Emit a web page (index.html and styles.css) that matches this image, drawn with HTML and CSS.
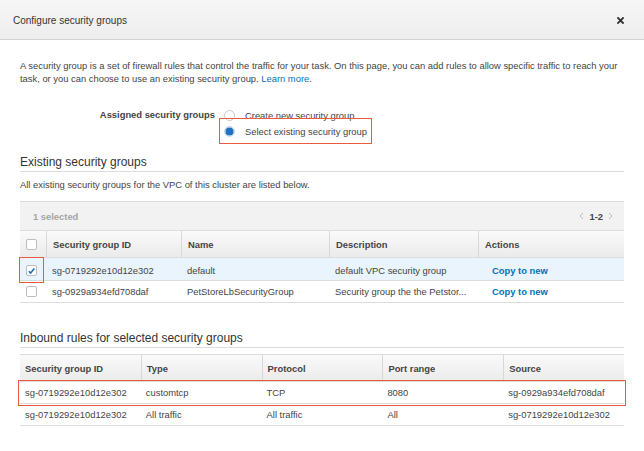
FILE: index.html
```html
<!DOCTYPE html>
<html lang="en">
<head>
<meta charset="utf-8">
<title>Configure security groups</title>
<link rel="stylesheet" href="styles.css">
</head>
<body>
<div class="modal">
  <header class="modal-header">
    <h1 class="modal-title">Configure security groups</h1>
    <button class="close" aria-label="Close">
      <svg width="7" height="7" viewBox="0 0 7 7"><path d="M1 1L6 6M6 1L1 6" stroke="#333" stroke-width="1.8" stroke-linecap="square"/></svg>
    </button>
  </header>
  <div class="modal-body">
    <p class="intro">A security group is a set of firewall rules that control the traffic for your task. On this page, you can add rules to allow specific traffic to reach your<br>task, or you can choose to use an existing security group. <a href="#" class="link">Learn more</a>.</p>

    <div class="field">
      <div class="field-label">Assigned security groups</div>
      <div class="options">
        <label class="option"><span class="radio"></span><span>Create new security group</span></label>
        <label class="option highlight"><span class="radio checked"></span><span>Select existing security group</span></label>
      </div>
    </div>

    <h2 class="section-title">Existing security groups</h2>
    <p class="section-desc">All existing security groups for the VPC of this cluster are listed below.</p>

    <div class="table existing">
      <div class="toolbar">
        <span class="count">1 selected</span>
        <span class="pager">
          <svg width="5" height="8" viewBox="0 0 5 8"><path d="M4 1L1 4L4 7" fill="none" stroke="#bbb" stroke-width="1"/></svg>
          <b>1-2</b>
          <svg width="5" height="8" viewBox="0 0 5 8"><path d="M1 1L4 4L1 7" fill="none" stroke="#bbb" stroke-width="1"/></svg>
        </span>
      </div>
      <div class="row head">
        <div class="cell cb"><span class="checkbox"></span></div>
        <div class="cell">Security group ID</div>
        <div class="cell">Name</div>
        <div class="cell">Description</div>
        <div class="cell">Actions</div>
      </div>
      <div class="row selected">
        <div class="cell cb"><span class="cb-mark"><span class="checkbox checked">
          <svg width="9" height="9" viewBox="0 0 9 9"><path d="M1.8 5.2L3.6 7L7.4 2.6" fill="none" stroke="#1b6fc2" stroke-width="1.6"/></svg>
        </span></span></div>
        <div class="cell">sg-0719292e10d12e302</div>
        <div class="cell">default</div>
        <div class="cell">default VPC security group</div>
        <div class="cell action"><a href="#" class="link bold">Copy to new</a></div>
      </div>
      <div class="row">
        <div class="cell cb"><span class="checkbox"></span></div>
        <div class="cell">sg-0929a934efd708daf</div>
        <div class="cell">PetStoreLbSecurityGroup</div>
        <div class="cell">Security group the the Petstor...</div>
        <div class="cell action"><a href="#" class="link bold">Copy to new</a></div>
      </div>
    </div>

    <h2 class="section-title inbound-title">Inbound rules for selected security groups</h2>

    <div class="table inbound">
      <div class="row head">
        <div class="cell">Security group ID</div>
        <div class="cell">Type</div>
        <div class="cell">Protocol</div>
        <div class="cell">Port range</div>
        <div class="cell">Source</div>
      </div>
      <div class="row highlight">
        <div class="cell">sg-0719292e10d12e302</div>
        <div class="cell">customtcp</div>
        <div class="cell">TCP</div>
        <div class="cell">8080</div>
        <div class="cell">sg-0929a934efd708daf</div>
      </div>
      <div class="row">
        <div class="cell">sg-0719292e10d12e302</div>
        <div class="cell">All traffic</div>
        <div class="cell">All traffic</div>
        <div class="cell">All</div>
        <div class="cell">sg-0719292e10d12e302</div>
      </div>
    </div>
  </div>
</div>
</body>
</html>
```

FILE: styles.css
```css
* { box-sizing: border-box; }

body {
  margin: 0;
  font-family: "Liberation Sans", Arial, Helvetica, sans-serif;
  font-size: 9.4px;
  color: #444;
  background: #fff;
}

.modal-header {
  height: 40px;
  border-bottom: 1px solid #d2d2d2;
  background: linear-gradient(#f6f6f6, #eeeeee);
  display: flex;
  align-items: center;
  justify-content: space-between;
  padding: 2px 20px 0 13px;
}

.modal-title {
  margin: 0;
  font-size: 10px;
  font-weight: normal;
  color: #333;
}

.close {
  border: 0;
  background: none;
  padding: 0;
  display: flex;
}

.modal-body {
  padding: 0 20px;
}

.intro {
  margin: 19px 0 0;
  line-height: 13px;
}

.link {
  color: #0073bb;
  text-decoration: none;
}

.bold { font-weight: bold; }

.field {
  display: flex;
  margin-top: 22px;
}

.field-label {
  width: 195px;
  text-align: right;
  font-weight: bold;
  line-height: 16px;
}

.options {
  display: flex;
  flex-direction: column;
  align-items: flex-start;
  margin-left: 8.5px;
}

.option {
  display: flex;
  align-items: center;
  gap: 10.5px;
  height: 16px;
}

.option.highlight {
  outline: 1.5px solid #ec5a3e;
  outline-offset: 4px;
}

.radio {
  width: 11px;
  height: 11px;
  border-radius: 50%;
  border: 1px solid #c8c8c8;
  background: #fff;
}

.radio.checked {
  border-color: #d6e4f1;
  background: #1f72c0;
  box-shadow: inset 0 0 0 0.5px #fff;
}

.section-title {
  margin: 15px 0 0;
  font-size: 12px;
  font-weight: normal;
  line-height: 16px;
  padding-bottom: 1px;
  border-bottom: 1px solid #dcdcdc;
  color: #333;
}

.section-desc {
  margin: 5.5px 0 0;
  line-height: 13px;
}

.table.existing {
  margin-top: 10.5px;
}

.toolbar {
  height: 30px;
  border-top: 1px solid #dcdcdc;
  border-bottom: 1px solid #dcdcdc;
  background: #f2f2f2;
  display: flex;
  align-items: center;
  justify-content: space-between;
  padding: 0 11px 0 13px;
}

.count {
  color: #a5a5a5;
  font-weight: bold;
}

.pager {
  display: flex;
  align-items: center;
  gap: 5px;
  color: #444;
}

.row {
  display: grid;
  grid-template-columns: 26px 135px 148px 149px 1fr;
  height: 22.5px;
  border-bottom: 1px solid #dcdcdc;
  align-items: stretch;
}

.row.head {
  height: 27px;
  background: linear-gradient(#fafafa, #ebebeb);
  font-weight: bold;
  color: #444;
}

.row.selected {
  background: #eaf4fd;
}

.cell {
  display: flex;
  align-items: center;
  padding-left: 6px;
  white-space: nowrap;
}

.row.head .cell + .cell {
  border-left: 1px solid #d8d8d8;
}

.cell.cb {
  padding-left: 5.5px;
}

.cell.action {
  padding-left: 14px;
}

.checkbox {
  width: 11px;
  height: 11px;
  border: 1px solid #bdbdbd;
  border-radius: 2px;
  background: #fff;
  display: flex;
  align-items: center;
  justify-content: center;
}

.cb-mark {
  display: flex;
  padding: 6.5px 6px;
  margin: 0 -6px;
  outline: 1.5px solid #ec5a3e;
  outline-offset: 0;
}

.inbound-title {
  margin-top: 27px;
}

.table.inbound {
  margin-top: 6px;
  border-top: 1px solid #dcdcdc;
}

.table.inbound .row {
  grid-template-columns: repeat(5, 1fr);
  height: 22px;
}

.table.inbound .row.head {
  height: 27px;
}

.table.inbound .cell {
  padding-left: 5px;
}

.row.highlight {
  outline: 1.5px solid #ec5a3e;
  outline-offset: 1px;
}
```
